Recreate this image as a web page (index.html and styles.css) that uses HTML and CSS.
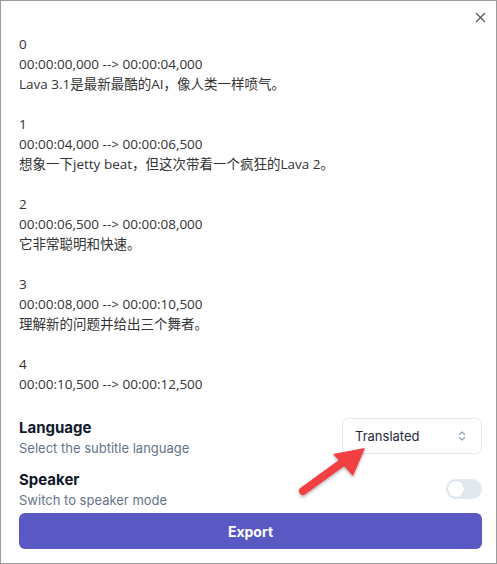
FILE: index.html
```html
<!DOCTYPE html>
<html>
<head>
<meta charset="utf-8">
<link rel="stylesheet" href="styles.css">
</head>
<body>
<div class="panel">
  <div class="topbar">
    <button class="close" aria-label="Close">
      <svg width="11" height="11" viewBox="0 0 11 11"><path d="M1 1L10 10M10 1L1 10" stroke="#555" stroke-width="1.2" fill="none"/></svg>
    </button>
  </div>
  <div class="subs">0
00:00:00,000 --&gt; 00:00:04,000
Lava 3.1是最新最酷的AI，像人类一样喷气。

1
00:00:04,000 --&gt; 00:00:06,500
想象一下jetty beat，但这次带着一个疯狂的Lava 2。

2
00:00:06,500 --&gt; 00:00:08,000
它非常聪明和快速。

3
00:00:08,000 --&gt; 00:00:10,500
理解新的问题并给出三个舞者。

4
00:00:10,500 --&gt; 00:00:12,500</div>
  <div class="settings">
    <div class="row">
      <div class="label">
        <div class="title">Language</div>
        <div class="desc">Select the subtitle language</div>
      </div>
      <div class="select">
        <span>Translated</span>
        <svg width="8" height="12" viewBox="0 0 8 12"><path d="M1.5 4.5L4 2L6.5 4.5M1.5 7.5L4 10L6.5 7.5" stroke="#94a3b8" stroke-width="1.2" fill="none" stroke-linecap="round" stroke-linejoin="round"/></svg>
      </div>
    </div>
    <div class="row row2">
      <div class="label">
        <div class="title">Speaker</div>
        <div class="desc">Switch to speaker mode</div>
      </div>
      <div class="toggle"><div class="knob"></div></div>
    </div>
    <button class="export">Export</button>
  </div>
  <svg class="arrow" width="90" height="70" viewBox="0 0 90 70">
    <defs>
      <filter id="sh" x="-20%" y="-20%" width="140%" height="140%">
        <feDropShadow dx="0" dy="1.5" stdDeviation="1.5" flood-color="#000" flood-opacity="0.35"/>
      </filter>
    </defs>
    <g filter="url(#sh)">
      <path d="M12 60L52 31" stroke="#f23f43" stroke-width="8" stroke-linecap="round"/>
      <polygon points="74,17 42,23 62,45" fill="#f23f43"/>
    </g>
  </svg>
</div>
</body>
</html>
```
FILE: styles.css
```css
* { box-sizing: border-box; }
html, body { margin: 0; padding: 0; background: #fff; }
.panel {
  position: relative;
  width: 497px;
  height: 564px;
  border: 1px solid #9d9d9d;
  background: #fff;
  display: flex;
  flex-direction: column;
  padding: 0 14px 0 18px;
}
.topbar {
  height: 33px;
  display: flex;
  justify-content: flex-end;
  align-items: flex-end;
}
.close {
  border: none;
  background: none;
  padding: 0;
  margin-right: -4px;
  margin-bottom: 11px;
  width: 11px;
  height: 11px;
  display: flex;
}
.subs {
  white-space: pre-wrap;
  font-family: "Open Sans", "Noto Sans CJK SC", sans-serif;
  font-size: 13.5px;
  line-height: 20px;
  color: #333;
  height: 360px;
  overflow: hidden;
}
.settings {
  font-family: Inter, "Noto Sans", sans-serif;
  display: flex;
  flex-direction: column;
  padding-top: 24px;
}
.row {
  display: flex;
  justify-content: space-between;
  align-items: flex-start;
}
.title {
  font-size: 15px;
  font-weight: 700;
  color: #0f172a;
  line-height: 20px;
}
.desc {
  font-size: 13px;
  color: #64748b;
  line-height: 20px;
}
.select {
  width: 140px;
  height: 36px;
  border: 1.5px solid #e2e8f0;
  border-radius: 6px;
  display: flex;
  align-items: center;
  justify-content: space-between;
  padding: 0 15px 0 12px;
  font-size: 13px;
  color: #1e293b;
  margin-top: 0;
}
.row2 { margin-top: 12px; align-items: center; }
.toggle {
  width: 36px;
  height: 20px;
  border-radius: 10px;
  background: #e2e8f0;
  padding: 2px;
  margin-top: -2px;
}
.knob {
  width: 16px;
  height: 16px;
  border-radius: 50%;
  background: #fff;
  box-shadow: 0 0 0 0.5px #cbd5e1;
}
.export {
  margin-top: 3px;
  height: 36px;
  width: 100%;
  border: none;
  border-radius: 6px;
  background: #5a59c4;
  color: #fff;
  font-family: Inter, "Noto Sans", sans-serif;
  font-weight: 700;
  font-size: 14px;
}
.arrow {
  position: absolute;
  left: 290px;
  top: 430px;
}
```
